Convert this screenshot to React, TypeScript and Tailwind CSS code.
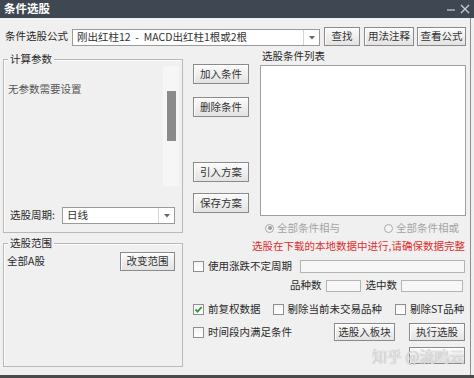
import React from "react";

const font = { fontFamily: '"Noto Sans CJK SC", "Noto Sans", sans-serif' };

const Btn: React.FC<{ label?: string; className?: string }> = ({ label, className = "" }) => (
  <div
    className={`flex items-center justify-center border border-[#8a8a8a] bg-gradient-to-b from-[#fbfbfb] to-[#e3e3e3] text-[#333] shadow-[inset_1px_1px_0_#ffffff] leading-none whitespace-nowrap shrink-0 ${className}`}
  >
    {label}
  </div>
);

const Check: React.FC<{ checked?: boolean }> = ({ checked }) => (
  <div className="w-[11px] h-[11px] border border-[#8f8f8f] bg-gradient-to-b from-[#f4f4f4] to-[#ffffff] flex items-center justify-center shrink-0">
    {checked && (
      <svg width="9" height="9" viewBox="0 0 9 9">
        <path d="M1.5 4.5 L3.6 6.6 L7.6 2" fill="none" stroke="#2f9a2f" strokeWidth="1.8" />
      </svg>
    )}
  </div>
);

const Combo: React.FC<{ text: string; className?: string }> = ({ text, className = "" }) => (
  <div className={`flex border border-[#9a9a9a] bg-white shrink-0 ${className}`}>
    <div className="flex-1 flex items-center pl-[4px] whitespace-pre text-[#333] leading-none overflow-hidden">{text}</div>
    <div className="w-[16px] border-l border-[#d4d4d4] flex items-center justify-center">
      <svg width="6" height="4" viewBox="0 0 6 4">
        <path d="M0 0 L6 0 L3 3.5 Z" fill="#666" />
      </svg>
    </div>
  </div>
);

const Radio: React.FC<{ on?: boolean }> = ({ on }) => (
  <div className="w-[9px] h-[9px] rounded-full border border-[#a8a8a8] bg-[#f4f4f4] flex items-center justify-center shrink-0">
    {on && <div className="w-[4px] h-[4px] rounded-full bg-[#9a9a9a]" />}
  </div>
);

export default function App() {
  return (
    <div className="w-[474px] h-[378px] overflow-hidden bg-[#f0f0f0] flex flex-col text-[10.5px] text-[#2a2a2a]" style={font}>
      {/* title bar */}
      <div className="h-[18px] bg-[#3f4852] flex items-center pl-[4px] pr-[4px] shrink-0">
        <span className="text-white font-bold text-[11.5px] leading-none">条件选股</span>
        <div className="ml-auto flex items-center gap-[5px]">
          <svg width="8" height="8" viewBox="0 0 8 8">
            <path d="M0 5 H8" stroke="#c9ced4" strokeWidth="1.2" />
          </svg>
          <svg width="10" height="10" viewBox="0 0 10 10">
            <path d="M1 1 L9 9 M9 1 L1 9" stroke="#c9ced4" strokeWidth="1.3" />
          </svg>
        </div>
      </div>

      <div className="flex-1 relative border-r border-[#8e8e8e] mr-[3px] whitespace-nowrap">
        {/* formula row */}
        <div className="mt-[9px] h-[19px] flex items-end pl-[5px]">
          <div className="w-[67px] self-center leading-none shrink-0">条件选股公式</div>
          <Combo text="刚出红柱12  -  MACD出红柱1根或2根" className="w-[248px] h-[17px]" />
          <Btn label="查找" className="ml-[4px] w-[36px] h-[19px]" />
          <Btn label="用法注释" className="ml-[4px] w-[50px] h-[19px]" />
          <Btn label="查看公式" className="ml-[3px] w-[49px] h-[19px]" />
        </div>

        <div className="flex">
          {/* left column */}
          <div className="ml-[3px] w-[180px] flex flex-col shrink-0">
            <div className="relative mt-[13px] h-[174px] border border-[#b8b8b8] shadow-[inset_1px_1px_0_#ffffff]">
              <span className="absolute left-[4px] top-[-7px] bg-[#f0f0f0] px-[2px] leading-[12px]">计算参数</span>
              <div className="flex pt-[6px] h-[126px]">
                <div className="flex-1 pl-[4px] pt-[17px] leading-[12px] text-[#555]">无参数需要设置</div>
                <div className="w-[16px] mr-[3px] h-[120px] bg-[#f6f6f6] pt-[25px] pl-[4px]">
                  <div className="w-[9px] h-[50px] bg-[#8a8a8a]" />
                </div>
              </div>
              <div className="mt-[21px] flex items-center h-[17px]">
                <div className="ml-[6px] w-[52px] leading-none shrink-0">选股周期:</div>
                <Combo text="日线" className="w-[113px] h-[17px]" />
              </div>
            </div>

            <div className="relative mt-[10px] h-[124px] border border-[#b8b8b8] shadow-[inset_1px_1px_0_#ffffff]">
              <span className="absolute left-[4px] top-[-7px] bg-[#f0f0f0] px-[2px] leading-[12px]">选股范围</span>
              <div className="mt-[8px] h-[19px] flex items-center">
                <div className="ml-[3px] leading-none">全部A股</div>
                <Btn label="改变范围" className="ml-auto mr-[7px] w-[55px] h-[19px]" />
              </div>
            </div>
          </div>

          {/* right area */}
          <div className="ml-[10px] w-[273px] flex flex-col shrink-0">
            <div className="flex h-[170px]">
              <div className="w-[56px] flex flex-col">
                <Btn label="加入条件" className="mt-[18px] h-[20px]" />
                <Btn label="删除条件" className="mt-[13px] h-[20px]" />
                <Btn label="引入方案" className="mt-[45px] h-[20px]" />
                <Btn label="保存方案" className="mt-[11px] h-[20px]" />
              </div>
              <div className="ml-[11px] w-[206px] flex flex-col">
                <div className="h-[19px] leading-[19px] pl-[2px]">选股条件列表</div>
                <div className="h-[151px] border border-[#a0a0a0] bg-white" />
              </div>
            </div>

            <div className="h-[24px] flex items-center text-[#a4a4a4]">
              <div className="ml-[72px] flex items-center gap-[3px]">
                <Radio on />
                <span className="leading-none">全部条件相与</span>
              </div>
              <div className="ml-[44px] flex items-center gap-[3px]">
                <Radio />
                <span className="leading-none">全部条件相或</span>
              </div>
            </div>

            <div className="h-[11px] leading-[11px] pl-[59px] text-[#de2f2f]">
              选股在下载的本地数据中进行,请确保数据完整
            </div>

            <div className="mt-[8px] h-[14px] flex items-center">
              <Check />
              <span className="ml-[4px] leading-none">使用涨跌不定周期</span>
              <div className="ml-auto mr-[1px] w-[165px] h-[13px] border border-[#b4b4b4] bg-[#f7f7f7] shrink-0" />
            </div>

            <div className="mt-[6px] h-[13px] flex items-center">
              <span className="ml-[97px] leading-none shrink-0">品种数</span>
              <div className="ml-[4px] w-[35px] h-[12px] border border-[#b4b4b4] bg-[#f7f7f7] shrink-0" />
              <span className="ml-[5px] leading-none shrink-0">选中数</span>
              <div className="ml-[4px] w-[62px] h-[12px] border border-[#b4b4b4] bg-[#f7f7f7] shrink-0" />
            </div>

            <div className="mt-[10px] h-[14px] flex items-center">
              <Check checked />
              <span className="ml-[4px] leading-none">前复权数据</span>
              <div className="ml-[12px]">
                <Check />
              </div>
              <span className="ml-[4px] leading-none">剔除当前未交易品种</span>
              <div className="ml-[13px]">
                <Check />
              </div>
              <span className="ml-[4px] leading-none">剔除ST品种</span>
            </div>

            <div className="mt-[7px] h-[18px] flex items-center">
              <Check />
              <span className="ml-[4px] leading-none">时间段内满足条件</span>
              <Btn label="选股入板块" className="ml-auto w-[61px] h-[18px]" />
              <Btn label="执行选股" className="ml-[14px] mr-[1px] w-[56px] h-[18px]" />
            </div>

            <div className="mt-[6px] h-[17px] flex">
              <Btn className="ml-auto mr-[1px] w-[56px] h-[17px]" />
            </div>
          </div>
        </div>

        <div className="absolute left-[372px] top-[330px] text-[15px] leading-none text-[#e4e4e4] [text-shadow:0_0_1px_#9a9a9a]">
          知乎 @流鸣云
        </div>
      </div>

      <div className="h-[3px] bg-[#4a4a4a] shrink-0" />
    </div>
  );
}
